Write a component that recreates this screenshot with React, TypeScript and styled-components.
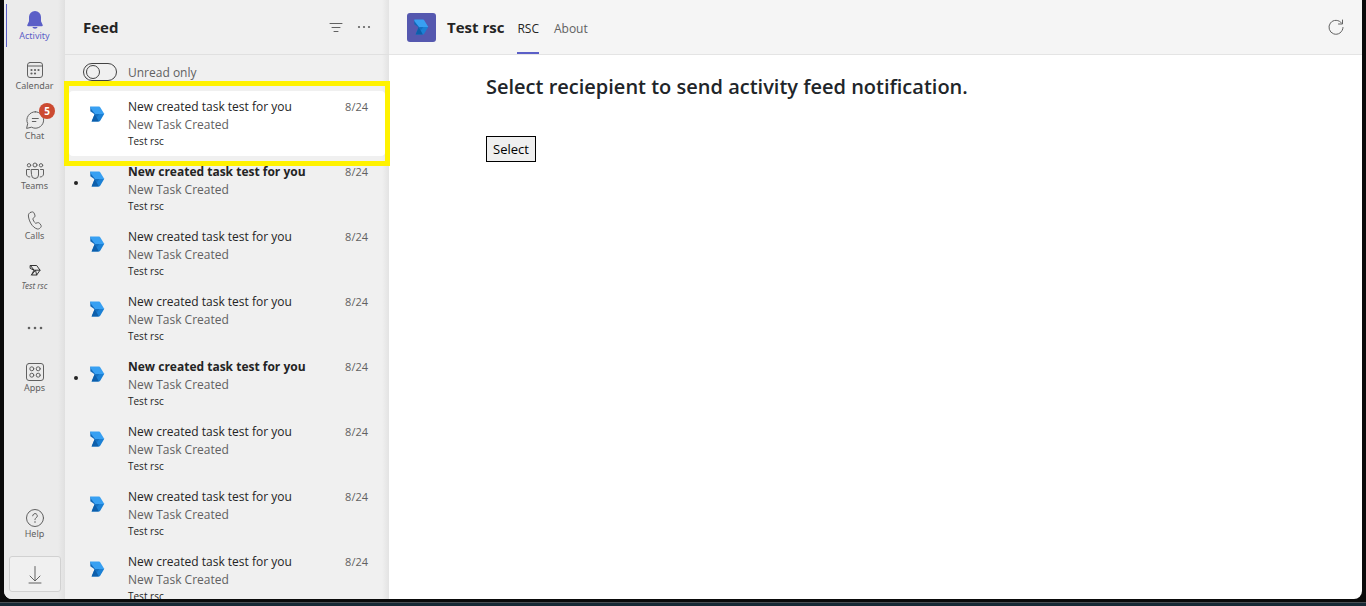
import React from 'react';
import styled, { createGlobalStyle, css } from 'styled-components';

const GlobalStyle = createGlobalStyle`
  *, *::before, *::after { box-sizing: border-box; }
  body {
    margin: 0;
    background: #0a0a0a;
    color: #242424;
    font-family: "Segoe UI", "Open Sans", "Noto Sans", sans-serif;
    font-size: 12px;
  }
  button, input { font: inherit; color: inherit; }
  h1, h2, p, ul { margin: 0; padding: 0; }
`;

const Desktop = styled.div`
  height: 100vh;
  display: flex;
  flex-direction: column;
  overflow: hidden;
`;

const AppWindow = styled.div`
  flex: 1;
  min-height: 0;
  margin: 0 4px 3px;
  display: flex;
  overflow: hidden;
  border-radius: 0 0 8px 8px;
  background: #ffffff;
`;

const Taskbar = styled.div`
  flex: none;
  height: 4px;
  border-top: 1px solid #4a4f54;
  background: #172935;
`;

const Rail = styled.nav`
  flex: none;
  width: 61px;
  display: flex;
  flex-direction: column;
  background: linear-gradient(to right, #ebebeb 54px, #e0e0e0);
`;

const RailItem = styled.a<{ $active?: boolean; $italic?: boolean }>`
  position: relative;
  height: 50px;
  padding-top: 10px;
  display: flex;
  flex-direction: column;
  align-items: center;
  color: ${(p) => (p.$active ? '#5b5fc7' : '#616161')};
  font-family: "Segoe UI", "Noto Sans", sans-serif;
  font-size: ${(p) => (p.$italic ? '8px' : '9px')};
  line-height: 12px;
  font-style: ${(p) => (p.$italic ? 'italic' : 'normal')};
  text-decoration: none;
  white-space: nowrap;

  svg { flex: none; }

  ${(p) =>
    p.$active &&
    css`
      &::before {
        content: '';
        position: absolute;
        left: 2px;
        top: 4px;
        width: 1px;
        height: 43px;
        background: #5b5fc7;
      }
    `}
`;

const MoreButton = styled.button`
  height: 52px;
  padding: 4px 0 0;
  border: 0;
  background: none;
  color: #616161;
  display: flex;
  align-items: center;
  justify-content: center;
`;

const Spacer = styled.div`
  flex: 1;
`;

const Badge = styled.span`
  position: absolute;
  left: 35px;
  top: 3px;
  width: 16px;
  height: 16px;
  border-radius: 50%;
  background: #cc4a31;
  color: #ffffff;
  font-size: 10px;
  font-weight: 700;
  line-height: 16px;
  text-align: center;
`;

const DownloadButton = styled.button`
  flex: none;
  height: 36px;
  margin: 8px 4px 7px 5px;
  padding: 0;
  border: 1px solid #d1d1d1;
  border-radius: 3px;
  background: #f0f0f0;
  color: #616161;
  display: flex;
  align-items: center;
  justify-content: center;
`;

const Feed = styled.section`
  position: relative;
  z-index: 1;
  flex: none;
  width: 324px;
  display: flex;
  flex-direction: column;
  background: linear-gradient(to right, #f0f0f0 317px, #e3e3e3);
`;

const FeedHeader = styled.header`
  flex: none;
  height: 55px;
  padding: 0 18px;
  display: flex;
  align-items: center;
  border-bottom: 1px solid #e0e0e0;
`;

const FeedTitle = styled.h1`
  flex: 1;
  font-size: 15px;
  line-height: 20px;
  font-weight: 700;
`;

const IconButton = styled.button`
  padding: 0;
  margin-left: 14px;
  border: 0;
  background: none;
  color: #616161;
  display: flex;
`;

const FilterRow = styled.label`
  flex: none;
  height: 36px;
  padding: 0 18px 2px;
  display: flex;
  align-items: center;
  gap: 11px;
  color: #616161;
`;

const Toggle = styled.input`
  appearance: none;
  width: 34px;
  height: 18px;
  margin: 0;
  padding: 1px 2px;
  border: 1px solid #424242;
  border-radius: 9px;
  display: flex;

  &::before {
    content: '';
    width: 14px;
    height: 14px;
    border: 1px solid #424242;
    border-radius: 50%;
  }

  &:checked { justify-content: flex-end; }
`;

const FeedList = styled.ul`
  flex: 1;
  min-height: 0;
  list-style: none;
`;

const FeedRow = styled.li<{ $selected?: boolean }>`
  position: relative;
  height: 65px;
  margin: 0 4px;
  padding: 7px 17px 0 7px;
  display: grid;
  grid-template-columns: 14px 38px 1fr auto;
  border-radius: 4px;
  background: ${(p) => (p.$selected ? '#ffffff' : 'transparent')};
`;

const Highlight = styled.span`
  position: absolute;
  z-index: 1;
  inset: -10px -5px;
  border: 5px solid #fff200;
  pointer-events: none;
`;

const UnreadDot = styled.span<{ $visible?: boolean }>`
  width: 4px;
  height: 4px;
  margin-top: 18px;
  margin-left: -2px;
  border-radius: 50%;
  background: ${(p) => (p.$visible ? '#242424' : 'transparent')};
`;

const RowLogo = styled.span`
  padding-top: 8px;
`;

const RowTitle = styled.h2<{ $unread?: boolean }>`
  font-size: 12px;
  line-height: 18px;
  font-weight: ${(p) => (p.$unread ? 700 : 400)};
  white-space: nowrap;
`;

const RowText = styled.p`
  line-height: 18px;
  color: #616161;
`;

const RowSource = styled.p`
  font-size: 10px;
  line-height: 14px;
`;

const RowDate = styled.time`
  font-size: 11px;
  line-height: 18px;
  color: #616161;
`;

const Main = styled.main`
  flex: 1;
  min-width: 0;
  display: flex;
  flex-direction: column;
`;

const MainHeader = styled.header`
  flex: none;
  height: 55px;
  padding: 0 18px;
  display: flex;
  align-items: center;
  border-bottom: 1px solid #e4e4e4;
  background: #f5f5f5;
`;

const AppTile = styled.span`
  width: 29px;
  height: 29px;
  margin-right: 11px;
  border-radius: 3px;
  background: #5558af;
  display: flex;
  align-items: center;
  justify-content: center;
`;

const AppName = styled.h1`
  margin-right: 13px;
  font-size: 15px;
  line-height: 20px;
  font-weight: 700;
`;

const Tab = styled.a<{ $active?: boolean }>`
  height: 54px;
  margin-right: 15px;
  padding-top: 3px;
  border-bottom: 2px solid ${(p) => (p.$active ? '#5b5fc7' : 'transparent')};
  color: ${(p) => (p.$active ? '#242424' : '#616161')};
  line-height: 52px;
  text-decoration: none;
`;

const Content = styled.div`
  padding: 18px 97px;
  display: flex;
  flex-direction: column;
  align-items: flex-start;
`;

const Prompt = styled.h2`
  margin-bottom: 35px;
  color: #212529;
  font-size: 20px;
  line-height: 28px;
  font-weight: 600;
`;

const SelectButton = styled.button`
  height: 26px;
  padding: 0 6px;
  border: 1px solid #000000;
  border-radius: 0;
  background: #efefef;
  color: #000000;
  font-size: 13px;
  line-height: 20px;
`;

const Icon = ({ size = 20, children }: { size?: number; children: React.ReactNode }) => (
  <svg width={size} height={size} viewBox={`0 0 ${size} ${size}`} fill="none" stroke="currentColor" strokeLinecap="round" strokeLinejoin="round" aria-hidden="true">
    {children}
  </svg>
);

const Dots = ({ size, gap, r }: { size: number; gap: number; r: number }) => (
  <Icon size={size}>
    {[-gap, 0, gap].map((d) => (
      <circle key={d} cx={size / 2 + d} cy={size / 2} r={r} fill="currentColor" stroke="none" />
    ))}
  </Icon>
);

const FlowLogo = () => (
  <svg width="15" height="16" viewBox="0 0 15 16" aria-hidden="true">
    <path d="M.3.800v4.400L4.600 8.200 5.600 7.500 1.500 1z" fill="#1268b8" />
    <path d="M4.800 7.800h9.500l-4.100 6.900q-.4.700-1.100.700H1.600z" fill="#1b80d4" />
    <path d="M4.800 7.800 1.600 15.400h7.200z" fill="#0d5eaa" />
    <path d="M4.800 7.800h4.700L6.700 11.500z" fill="#1470c2" />
    <path d="M.3.500h8.800q.7 0 1.100.7L14.300 8H5L.3 2z" fill="#38a0f2" />
  </svg>
);

const BellIcon = () => (
  <Icon>
    <path d="M10 1a6 6 0 0 0-6 6v4.300L2.300 15c-.3.7.1 1.200.7 1.200h14c.6 0 1-.5.7-1.200L16 11.300V7a6 6 0 0 0-6-6zM7.300 17a2.800 2.300 0 0 0 5.400 0z" fill="currentColor" stroke="none" />
  </Icon>
);

const CalendarIcon = () => (
  <Icon>
    <rect x="2.500" y="2.500" width="15" height="15" rx="2.500" />
    <path d="M2.500 6h15" />
    {[[6.5, 13.5], [10, 13.5], [6.5, 10], [10, 10], [13.5, 10]].map(([x, y]) => (
      <circle key={`${x}-${y}`} cx={x} cy={y} r="1.100" fill="currentColor" stroke="none" />
    ))}
  </Icon>
);

const ChatIcon = () => (
  <Icon>
    <path d="M10.300 1.800a8.200 8.200 0 1 1-3.800 15.400L1.600 18.400l1.100-4.800A8.200 8.200 0 0 1 10.300 1.800z" />
    <path d="M7.300 8.500h6M7.300 11.500h3.600" />
  </Icon>
);

const TeamsIcon = () => (
  <Icon>
    <circle cx="10" cy="5" r="2" />
    <circle cx="4" cy="5.300" r="1.700" />
    <circle cx="16" cy="5.300" r="1.700" />
    <path d="M6.500 9.500h7V15a3.500 3.500 0 0 1-7 0z" />
    <path d="M4.500 9.500h-3V14a3 3 0 0 0 3.300 3M15.500 9.500h3V14a3 3 0 0 1-3.300 3" />
  </Icon>
);

const PhoneIcon = () => (
  <Icon>
    <path d="m5.600 2.400 1.200-.4c.9-.3 1.900.2 2.200 1l.9 2c.3.800.1 1.600-.4 2.200L7.800 8.600c.3 1.700 1.500 3.700 2.800 4.700l2.100-.6c.7-.2 1.500 0 2 .7l1.200 1.700c.5.700.4 1.700-.2 2.300l-.8.8c-.8.700-1.900 1-2.900.7C7.300 17.300 4 11.500 3.400 6c-.2-1.600.6-3.100 2.200-3.600z" />
  </Icon>
);

const FlowOutlineIcon = () => (
  <Icon>
    <path d="M5.500 5.500h6.200L15 10.200l-3.300 4.800H6.500L9 10.200 5.500 8.500zM5.500 5.500 9 10.200h6M6.500 15l4-4.800 1.200 4.800" stroke="#333333" />
  </Icon>
);

const AppsIcon = () => (
  <Icon>
    <rect x="1.500" y="1.500" width="17" height="17" rx="2.500" />
    {[[6.8, 6.8], [13.2, 6.8], [6.8, 13.2], [13.2, 13.2]].map(([x, y]) => (
      <circle key={`${x}-${y}`} cx={x} cy={y} r="2" />
    ))}
  </Icon>
);

const HelpIcon = () => (
  <Icon>
    <circle cx="10" cy="10" r="8.500" />
    <path d="M7.700 7.800a2.300 2.300 0 1 1 3.500 2c-.8.500-1.200.9-1.200 1.900" />
    <circle cx="10" cy="14" r=".8" fill="currentColor" stroke="none" />
  </Icon>
);

const DownloadIcon = () => (
  <Icon>
    <path d="M10 2.500v14M5 12l5 5 5-5M4 19h12" />
  </Icon>
);

const FilterIcon = () => (
  <Icon size={14}>
    <path d="M1 3.500h12M3 7.500h8M5 11.500h4" />
  </Icon>
);

const RefreshIcon = () => (
  <Icon size={16}>
    <path d="M13.700 4.200A7 7 0 1 0 15 8.500M14.500 1v4H10.500" />
  </Icon>
);

const feedItems = [
  { id: 1, selected: true },
  { id: 2, unread: true },
  { id: 3 },
  { id: 4 },
  { id: 5, unread: true },
  { id: 6 },
  { id: 7 },
  { id: 8 },
] as { id: number; selected?: boolean; unread?: boolean }[];

export default function App() {
  return (
    <Desktop>
      <GlobalStyle />
      <AppWindow>
        <Rail aria-label="Apps">
          <RailItem href="#activity" $active><BellIcon />Activity</RailItem>
          <RailItem href="#calendar"><CalendarIcon />Calendar</RailItem>
          <RailItem href="#chat"><ChatIcon />Chat<Badge>5</Badge></RailItem>
          <RailItem href="#teams"><TeamsIcon />Teams</RailItem>
          <RailItem href="#calls"><PhoneIcon />Calls</RailItem>
          <RailItem href="#test-rsc" $italic><FlowOutlineIcon />Test rsc</RailItem>
          <MoreButton aria-label="More apps"><Dots size={20} gap={6} r={1.3} /></MoreButton>
          <RailItem href="#apps"><AppsIcon />Apps</RailItem>
          <Spacer />
          <RailItem href="#help"><HelpIcon />Help</RailItem>
          <DownloadButton aria-label="Download"><DownloadIcon /></DownloadButton>
        </Rail>

        <Feed>
          <FeedHeader>
            <FeedTitle>Feed</FeedTitle>
            <IconButton aria-label="Filter"><FilterIcon /></IconButton>
            <IconButton aria-label="More options"><Dots size={14} gap={5} r={1.1} /></IconButton>
          </FeedHeader>
          <FilterRow>
            <Toggle type="checkbox" role="switch" />
            Unread only
          </FilterRow>
          <FeedList>
            {feedItems.map((item) => (
              <FeedRow key={item.id} $selected={item.selected}>
                <UnreadDot $visible={item.unread} />
                <RowLogo><FlowLogo /></RowLogo>
                <div>
                  <RowTitle $unread={item.unread}>New created task test for you</RowTitle>
                  <RowText>New Task Created</RowText>
                  <RowSource>Test rsc</RowSource>
                </div>
                <RowDate>8/24</RowDate>
                {item.selected && <Highlight />}
              </FeedRow>
            ))}
          </FeedList>
        </Feed>

        <Main>
          <MainHeader>
            <AppTile><FlowLogo /></AppTile>
            <AppName>Test rsc</AppName>
            <Tab href="#rsc" $active>RSC</Tab>
            <Tab href="#about">About</Tab>
            <Spacer />
            <IconButton aria-label="Reload"><RefreshIcon /></IconButton>
          </MainHeader>
          <Content>
            <Prompt>Select reciepient to send activity feed notification.</Prompt>
            <SelectButton>Select</SelectButton>
          </Content>
        </Main>
      </AppWindow>
      <Taskbar />
    </Desktop>
  );
}
